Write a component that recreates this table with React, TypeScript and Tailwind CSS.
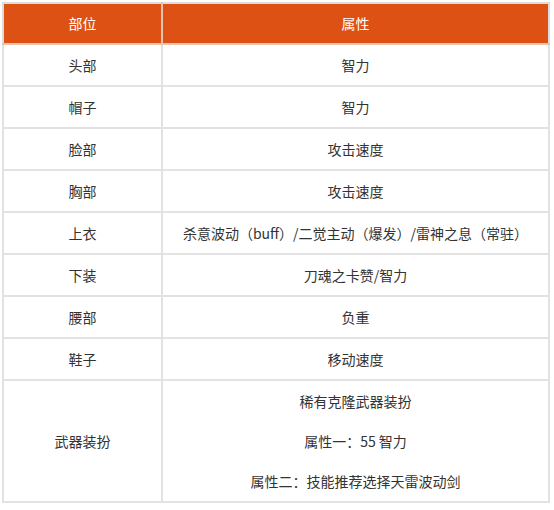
const ROWS = [
  { part: '头部', attr: '智力' },
  { part: '帽子', attr: '智力' },
  { part: '脸部', attr: '攻击速度' },
  { part: '胸部', attr: '攻击速度' },
  { part: '上衣', attr: '杀意波动（buff）/二觉主动（爆发）/雷神之息（常驻）' },
  { part: '下装', attr: '刀魂之卡赞/智力' },
  { part: '腰部', attr: '负重' },
  { part: '鞋子', attr: '移动速度' },
]

const WEAPON_LINES = ['稀有克隆武器装扮', '属性一：55 智力', '属性二：技能推荐选择天雷波动剑']

export default function App() {
  return (
    <div
      className="w-[554px] h-[510px] bg-white pt-[2px] pl-[2px] text-[14px] text-[#333333]"
      style={{ fontFamily: '"Microsoft YaHei", "Noto Sans CJK SC", "Noto Sans", sans-serif' }}
    >
      <table className="w-[548px] border-collapse border-2 border-[#dcdcdc] table-fixed">
        <colgroup>
          <col className="w-[159px]" />
          <col />
        </colgroup>
        <thead>
          <tr className="h-[41px] bg-[#dd5114] text-white">
            <th className="font-normal border-2 border-[#e9c2b0] border-t-[#dcdcdc] border-l-[#dcdcdc]">部位</th>
            <th className="font-normal border-2 border-[#e9c2b0] border-t-[#dcdcdc] border-r-[#dcdcdc]">属性</th>
          </tr>
        </thead>
        <tbody>
          {ROWS.map((r, i) => (
            <tr key={i} className="h-[42px]">
              <td className="text-center border-2 border-[#e2e2e2]">{r.part}</td>
              <td className="text-center border-2 border-[#e2e2e2]">{r.attr}</td>
            </tr>
          ))}
          <tr className="h-[122px]">
            <td className="text-center border-2 border-[#e2e2e2]">武器装扮</td>
            <td className="border-2 border-[#e2e2e2]">
              <div className="flex flex-col items-center gap-[20px]">
                {WEAPON_LINES.map((l, i) => (
                  <span key={i} className="leading-[20px]">{l}</span>
                ))}
              </div>
            </td>
          </tr>
        </tbody>
      </table>
    </div>
  )
}
